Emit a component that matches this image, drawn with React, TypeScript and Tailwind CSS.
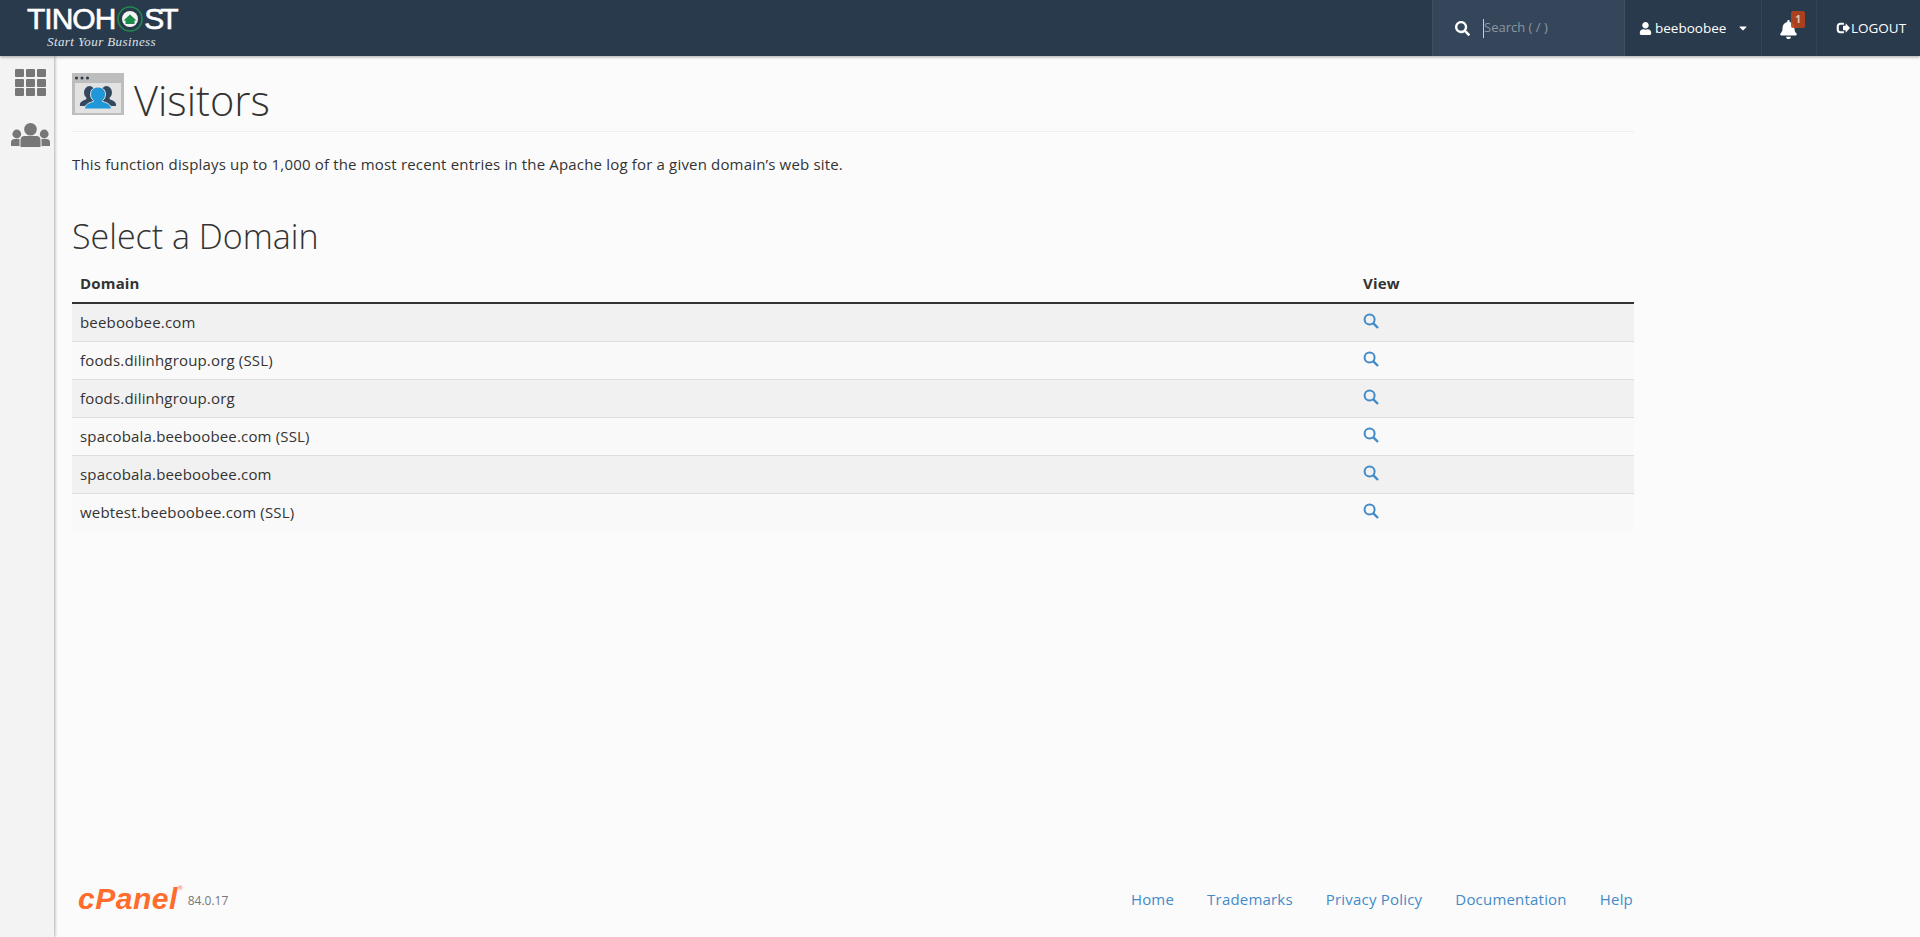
import React from "react";
import { FaSearch, FaUser, FaBell, FaCaretDown } from "react-icons/fa";

const rows = [
  "beeboobee.com",
  "foods.dilinhgroup.org (SSL)",
  "foods.dilinhgroup.org",
  "spacobala.beeboobee.com (SSL)",
  "spacobala.beeboobee.com",
  "webtest.beeboobee.com (SSL)",
];

function Lens({ className }: { className?: string }) {
  return (
    <svg viewBox="0 0 16 16" className={className} fill="none" stroke="currentColor">
      <circle cx="6.6" cy="6.6" r="5" strokeWidth="2" />
      <path d="M10.4 10.4 15 15" strokeWidth="2.4" />
    </svg>
  );
}

function UsersIcon() {
  return (
    <svg viewBox="0 0 39 24" className="w-[39px] h-[24px]" fill="#777">
      <circle cx="5.8" cy="11" r="4.4" />
      <circle cx="33.2" cy="11" r="4.4" />
      <path d="M0 23v-3.500c0-2.500 1.500-3.500 3.500-3.500h5v7z" />
      <path d="M39 23v-3.500c0-2.500-1.500-3.500-3.500-3.500h-5v7z" />
      <circle cx="19.500" cy="6.300" r="6.300" />
      <path d="M9.500 24V17c0-2.500 1.800-4 4-4h12c2.200 0 4 1.500 4 4v7z" />
    </svg>
  );
}

function VisitorsIcon() {
  return (
    <svg viewBox="0 0 52 42" className="w-[52px] h-[42px] shrink-0">
      <rect width="52" height="42" fill="#bdbdbd" />
      <rect x="3" y="10" width="46" height="30" fill="#e2e2e2" />
      <circle cx="4.500" cy="5" r="1.500" fill="#2d3a4a" />
      <circle cx="10" cy="5" r="1.500" fill="#2d3a4a" />
      <circle cx="15.500" cy="5" r="1.500" fill="#2d3a4a" />
      <g fill="#34485f">
        <ellipse cx="17.500" cy="19.500" rx="5.500" ry="6.500" />
        <ellipse cx="34.500" cy="19.500" rx="5.500" ry="6.500" />
        <path d="M15 24h5l3 5-6 4H8c-.5-3 1-5 6-6.500z" />
        <path d="M37 24h-5l-3 5 6 4h9c.5-3-1-5-6-6.500z" />
      </g>
      <g fill="#1f97d8" stroke="#e2e2e2" strokeWidth="1">
        <path d="M26 14c4.300 0 7.500 3 7.500 7.200 0 2.800-1.200 5-2.900 6.300v1c4.500 1.200 8.400 3 9 7.500H12.400c.6-4.500 4.500-6.300 9-7.500v-1c-1.700-1.300-2.900-3.500-2.900-6.300C18.500 17 21.700 14 26 14z" />
      </g>
    </svg>
  );
}

export default function App() {
  return (
    <div className="h-[937px] flex flex-col bg-[#fbfbfb] text-[#333] overflow-hidden font-['Open_Sans',sans-serif]">
      <header className="h-14 shrink-0 bg-[#2a3a4d] flex items-stretch justify-between relative z-10 shadow-[0_1px_3px_rgba(0,0,0,0.35)]">
        <div className="pl-[27px] pt-[3px]">
          <div className="flex items-center h-[31px] text-white text-[30px] leading-[31px] font-['Liberation_Sans',sans-serif] [-webkit-text-stroke:0.6px_white] whitespace-nowrap">
            <span className="tracking-[-1px]">TINOH</span>
            <svg viewBox="0 0 26 26" className="w-[26px] h-[26px] shrink-0 ml-[2px]">
              <circle cx="13" cy="13" r="12" fill="#2a3a4d" stroke="#1f8a4c" strokeWidth="1.600" />
              <circle cx="13" cy="13" r="8" fill="#f4f6f4" />
              <path d="M6.500 14.500 13 8.500l6.500 6h-2V18h-9v-3.500z" fill="#1c8c4b" />
            </svg>
            <span className="tracking-[-4px] ml-[1px]">ST</span>
          </div>
          <div className="pl-[20px] text-[#dfe3e6] italic text-[13px] leading-[16px] tracking-[0.4px] font-['Liberation_Serif',serif] whitespace-nowrap">
            Start Your Business
          </div>
        </div>
        <div className="flex items-stretch text-white">
          <div className="w-[193px] bg-[#35465a] border-x border-[#3f5064] flex items-center pl-[22px]">
            <FaSearch className="text-[15px]" />
            <div className="ml-[13px] h-[19px] border-l border-[#c5ccd3] flex items-center text-[#8b97a3] text-[13px] whitespace-nowrap">
              Search ( / )
            </div>
          </div>
          <div className="w-[137px] border-r border-[#33445a] flex items-center pl-[14px]">
            <FaUser className="text-[13px]" />
            <span className="ml-[3px] text-[13.500px] font-medium">beeboobee</span>
            <FaCaretDown className="ml-[11px] text-[12px]" />
          </div>
          <div className="w-[55px] border-r border-[#33445a] relative flex items-center justify-center">
            <FaBell className="text-[19px] mr-[1px] mt-[3px]" />
            <span className="absolute left-[29px] top-[11px] w-[14px] h-[17px] bg-[#b7421b]/90 rounded-[2px] text-[10px] font-bold leading-[17px] text-center text-[#e8c4b4]">1</span>
          </div>
          <div className="w-[103px] flex items-center pl-[19px]">
            <svg viewBox="0 0 16 16" className="w-[14px] h-[14px] shrink-0" fill="none" stroke="currentColor">
              <path d="M9 3.200H5a3 3 0 0 0-3 3v3.600a3 3 0 0 0 3 3h4" strokeWidth="2.400" />
              <path d="M8 5.500h3V2.500L16 8l-5 5.500v-3H8z" fill="currentColor" stroke="none" />
            </svg>
            <span className="ml-[1px] text-[13.500px] font-medium whitespace-nowrap">LOGOUT</span>
          </div>
        </div>
      </header>

      <div className="flex-1 flex min-h-0">
        <aside className="w-[54px] shrink-0 bg-[#f3f3f3] shadow-[1px_0_3px_rgba(0,0,0,0.3)] flex flex-col items-start pt-[13px] pl-[15px]">
          <div className="grid grid-cols-3 gap-x-[1.500px] gap-y-[1.500px] w-[31px]">
            {Array.from({ length: 9 }).map((_, i) => (
              <div key={i} className="h-[8px] bg-[#777] rounded-[1px]" />
            ))}
          </div>
          <div className="mt-[27px] -ml-[4px]">
            <UsersIcon />
          </div>
        </aside>

        <main className="flex-1 min-w-0 pl-[18px] flex flex-col">
          <div className="w-[1562px] flex-1 flex flex-col">
            <div className="h-[76px] border-b border-[#eee] flex items-start pt-[17px]">
              <VisitorsIcon />
              <h1 className="ml-[10px] mt-[4px] text-[41.500px] leading-[46px] font-light text-[#333] whitespace-nowrap">Visitors</h1>
            </div>
            <p className="mt-[22px] text-[15px] tracking-[0.17px] leading-[20px]">
              This function displays up to 1,000 of the most recent entries in the Apache log for a given domain’s web site.
            </p>
            <h2 className="mt-[44px] text-[34px] leading-[36px] font-light">Select a Domain</h2>
            <table className="mt-[11px] w-full border-collapse text-[15px] tracking-[0.17px]">
              <thead>
                <tr className="h-[38px] border-b-2 border-[#333]">
                  <th className="text-left font-bold pl-[8px] w-[1291px]">Domain</th>
                  <th className="text-left font-bold">View</th>
                </tr>
              </thead>
              <tbody>
                {rows.map((r, i) => (
                  <tr key={r} className={`h-[38px] ${i === 5 ? "" : "border-b border-[#ddd]"} ${i % 2 === 0 ? "bg-[#f1f1f1]" : "bg-[#f9f9f9]"}`}>
                    <td className="pl-[8px]">{r}</td>
                    <td className="text-[#428bca]">
                      <Lens className="w-[16px] h-[16px] -mt-[2px]" />
                    </td>
                  </tr>
                ))}
              </tbody>
            </table>
            <div className="mt-auto mb-[23px] flex items-center justify-between">
              <div className="flex items-center pl-[6px]">
                <span className="text-[#ff6c2c] text-[30px] leading-[30px] font-bold italic font-['Liberation_Sans',sans-serif] tracking-[0.5px]">cPanel</span>
                <span className="self-start text-[#ff6c2c] text-[6px] leading-[8px]">®</span>
                <span className="ml-[5px] mt-[3px] text-[12px] text-[#777]">84.0.17</span>
              </div>
              <nav className="flex gap-[33px] text-[15px] tracking-[0.2px] text-[#428bca] pr-[1px]">
                <a>Home</a>
                <a>Trademarks</a>
                <a>Privacy Policy</a>
                <a>Documentation</a>
                <a>Help</a>
              </nav>
            </div>
          </div>
        </main>
      </div>
    </div>
  );
}
